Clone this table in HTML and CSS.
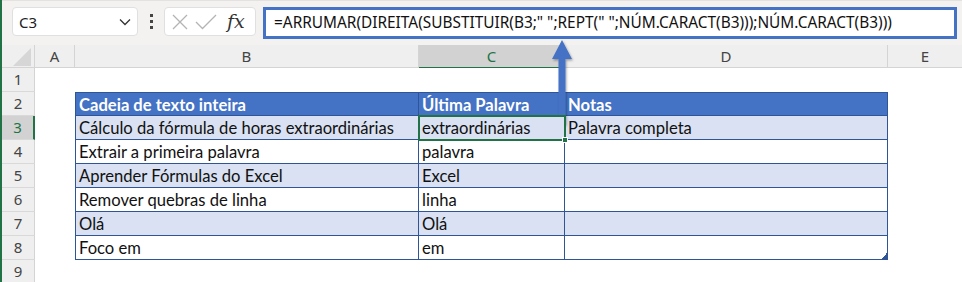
FILE: index.html
```html
<!DOCTYPE html>
<html lang="pt">
<head>
<meta charset="utf-8">
<link rel="stylesheet" href="styles.css">
</head>
<body>
<div class="app">
  <div class="toolbar">
    <div class="namebox">
      <span class="ref">C3</span>
      <svg class="chev" width="12" height="8" viewBox="0 0 12 8"><path d="M1 1.5 L6 6.5 L11 1.5" fill="none" stroke="#333" stroke-width="1.3"/></svg>
    </div>
    <div class="dots"><i></i><i></i><i></i></div>
    <div class="fxbox">
      <svg width="18" height="18" viewBox="0 0 18 18"><path d="M2 2 L16 16 M16 2 L2 16" stroke="#b4b4b4" stroke-width="1.3" fill="none"/></svg>
      <svg width="22" height="18" viewBox="0 0 22 18"><path d="M1 9 L7.5 15.5 L21 2" stroke="#b4b4b4" stroke-width="1.3" fill="none"/></svg>
      <span class="fx">fx</span>
    </div>
    <div class="formula">=ARRUMAR(DIREITA(SUBSTITUIR(B3;" ";REPT(" ";NÚM.CARACT(B3)));NÚM.CARACT(B3)))</div>
  </div>
  <div class="sheet">
    <div class="row colheads">
      <div class="corner"><svg width="18" height="18" viewBox="0 0 18 18"><path d="M18 0 L18 18 L0 18 Z" fill="#d6d6d6"/></svg></div>
      <div class="ch">A</div>
      <div class="ch">B</div>
      <div class="ch sel">C</div>
      <div class="ch">D</div>
      <div class="ch last">E</div>
    </div>
    <div class="row"><div class="rh">1</div><div class="c"></div><div class="c"></div><div class="c"></div><div class="c"></div><div class="c"></div></div>
    <div class="row"><div class="rh">2</div><div class="c"></div>
      <div class="t th first top">Cadeia de texto inteira</div><div class="t th top">Última Palavra</div><div class="t th top">Notas</div><div class="c"></div></div>
    <div class="row"><div class="rh sel">3</div><div class="c"></div>
      <div class="t band first">Cálculo da fórmula de horas extraordinárias</div><div class="t band active">extraordinárias<span class="handle"></span></div><div class="t band">Palavra completa</div><div class="c"></div></div>
    <div class="row"><div class="rh">4</div><div class="c"></div>
      <div class="t first">Extrair a primeira palavra</div><div class="t">palavra</div><div class="t"></div><div class="c"></div></div>
    <div class="row"><div class="rh">5</div><div class="c"></div>
      <div class="t band first">Aprender Fórmulas do Excel</div><div class="t band">Excel</div><div class="t band"></div><div class="c"></div></div>
    <div class="row"><div class="rh">6</div><div class="c"></div>
      <div class="t first">Remover quebras de linha</div><div class="t">linha</div><div class="t"></div><div class="c"></div></div>
    <div class="row"><div class="rh">7</div><div class="c"></div>
      <div class="t band first">Olá</div><div class="t band">Olá</div><div class="t band"></div><div class="c"></div></div>
    <div class="row"><div class="rh">8</div><div class="c"></div>
      <div class="t first">Foco em</div><div class="t">em</div><div class="t resize"></div><div class="c"></div></div>
    <div class="row"><div class="rh">9</div><div class="c"></div><div class="c"></div><div class="c"></div><div class="c"></div><div class="c"></div></div>
  </div>
  <svg class="arrow" width="24" height="90" viewBox="0 0 24 90">
    <defs><filter id="sh" x="-50%" y="-10%" width="200%" height="130%"><feDropShadow dx="1" dy="1.5" stdDeviation="1.2" flood-color="#000" flood-opacity="0.35"/></filter></defs>
    <path d="M11 0 L21 19 L14.5 19 L14.5 83 Q14.5 85 12.5 85 L9.5 85 Q7.5 85 7.5 83 L7.5 19 L1 19 Z" fill="#4472c4" filter="url(#sh)"/>
  </svg>
</div>
</body>
</html>
```
FILE: styles.css
```css
* { box-sizing: border-box; }
html, body { margin: 0; padding: 0; background: #fff; }
body { width: 962px; height: 282px; overflow: hidden; font-family: "Noto Sans", sans-serif; }
.app { position: relative; width: 962px; height: 282px; border-left: 2px solid #217346; }
.toolbar { height: 45px; background: #f3f2f1; border-top: 1px solid #e4e2e0; display: flex; align-items: flex-start; padding-top: 6px; }
.namebox { margin-left: 10px; width: 126px; height: 29px; background: #fff; border: 1px solid #e0e0e0; border-radius: 4px; display: flex; align-items: center; justify-content: space-between; padding: 0 6px 0 6px; }
.ref { font-size: 15px; color: #222; }
.chev { margin-top: 1px; }
.dots { width: 26px; height: 29px; display: flex; flex-direction: column; align-items: center; justify-content: center; gap: 3px; }
.dots i { display: block; width: 3px; height: 3px; background: #444; }
.fxbox { width: 92px; height: 29px; background: #fff; border: 1px solid #e0e0e0; border-radius: 4px; display: flex; align-items: center; padding-left: 6px; gap: 6px; }
.fx { font-family: "DejaVu Serif", "Liberation Serif", serif; font-style: italic; font-size: 19px; color: #333; margin-left: 4px; line-height: 1; }
.formula { margin-left: 7px; width: 694px; height: 32px; border: 3px solid #4472c4; background: #fff; font-size: 15.4px; color: #111; padding-left: 8px; line-height: 26px; white-space: nowrap; }
.sheet { display: flex; flex-direction: column; }
.row { display: grid; grid-template-columns: 33px 40px 344px 146px 323px 74px; height: 24px; }
.colheads { height: 23px; background: #efefef; border-bottom: 1px solid #d4d4d4; }
.corner { display: flex; align-items: flex-end; justify-content: flex-end; padding: 0 3px 3px 0; border-right: 1px solid #d4d4d4; }
.ch { font-size: 15px; color: #444; text-align: center; line-height: 22px; border-right: 1px solid #d4d4d4; }
.ch.last { border-right: none; }
.ch.sel { background: #d2d2d2; color: #217346; border-bottom: 2px solid #217346; line-height: 22px; }
.rh { background: #efefef; font-size: 15px; color: #444; text-align: center; line-height: 23px; border-bottom: 1px solid #d9d9d9; border-right: 1px solid #d4d4d4; }
.rh.sel { background: #d2d2d2; color: #217346; border-right: 2px solid #217346; }
.c { background: #fff; }
.t { font-family: "Lato", sans-serif; font-size: 16.6px; color: #111; line-height: 21px; padding: 2px 0 0 3px; border-right: 1px solid #2f5597; border-bottom: 1px solid #2f5597; background: #fff; white-space: nowrap; position: relative; }
.t.first { border-left: 1px solid #2f5597; }
.t.top { border-top: 1px solid #2f5597; line-height: 20px; }
.t.th { background: #4472c4; color: #fff; font-weight: bold; }
.t.band { background: #d9e1f2; }
.t.active { outline: 2px solid #217346; outline-offset: -1px; z-index: 2; }
.handle { position: absolute; right: -4px; bottom: -4px; width: 6px; height: 6px; background: #217346; border: 1px solid #fff; }
.resize::after { content: ""; position: absolute; right: 0; bottom: 0; width: 6px; height: 6px; background: linear-gradient(to bottom right, transparent 50%, #2f5597 50%); }
.arrow { position: absolute; left: 549px; top: 40px; }
```
